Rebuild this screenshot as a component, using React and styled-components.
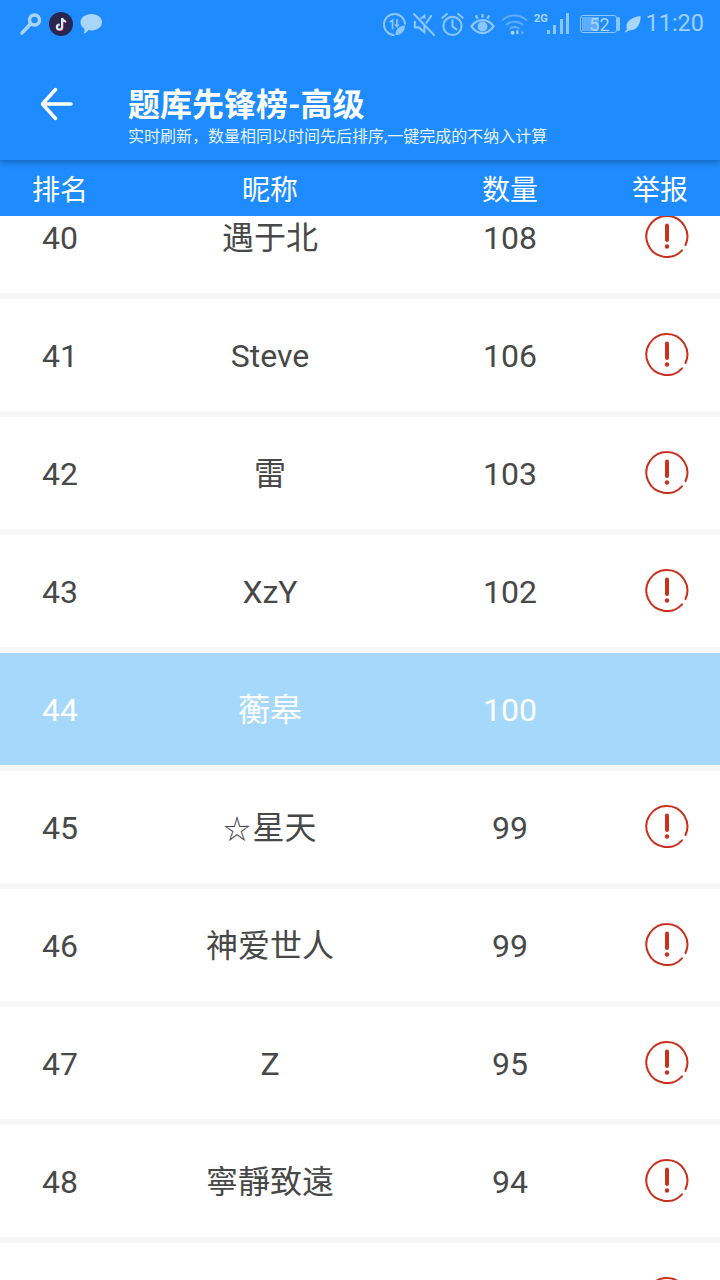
import React from 'react';
import styled, { createGlobalStyle } from 'styled-components';

const BLUE = '#1e8cff';
const FONT = `Roboto, 'Noto Sans CJK SC', sans-serif`;

const GlobalStyle = createGlobalStyle`
  html, body {
    margin: 0;
    padding: 0;
    background: #f7f7f7;
    font-family: ${FONT};
  }
`;

const Page = styled.div`
  width: 720px;
  height: 1280px;
  overflow: hidden;
  display: flex;
  flex-direction: column;
`;

const TopBar = styled.header`
  height: 160px;
  flex: none;
  background: ${BLUE};
  box-shadow: 0 2px 7px rgba(0, 0, 0, 0.32);
  position: relative;
  z-index: 2;
  display: flex;
  flex-direction: column;
`;

const StatusBar = styled.div`
  height: 48px;
  display: flex;
  align-items: center;
  justify-content: space-between;
  padding: 0 16px 0 19px;
`;

const StatusGroup = styled.div`
  display: flex;
  align-items: center;
  gap: ${(p) => p.$gap ?? 6}px;
  margin-left: ${(p) => p.$indent || 0}px;
`;

const Clock = styled.span`
  font-size: 23.5px;
  color: #9fd0ff;
  line-height: 1;
`;

const Battery = styled.div`
  width: 37px;
  height: 18px;
  border: 1px solid #8cc6ff;
  border-radius: 3px;
  box-sizing: border-box;
  padding: 1px;
  display: flex;
`;

const BatteryFill = styled.div`
  width: 52%;
  background: #5fadff;
`;

const BatteryLabel = styled.span`
  font-size: 18px;
  line-height: 16px;
  color: #a8d4ff;
  margin-left: -16px;
  width: 32px;
  text-align: center;
  flex: none;
`;

const NavRow = styled.div`
  flex: 1;
  display: flex;
  align-items: flex-start;
  padding: 34px 0 0 38px;
`;

const BackButton = styled.div`
  width: 90px;
  height: 44px;
  flex: none;
`;

const Titles = styled.div`
  display: flex;
  flex-direction: column;
`;

const Title = styled.h1`
  margin: 0;
  font-size: 32px;
  line-height: 46px;
  font-weight: 700;
  color: #fff;
  white-space: nowrap;
`;

const Subtitle = styled.p`
  margin: -1px 0 0;
  font-size: 16px;
  line-height: 20px;
  color: #e6f2ff;
  white-space: nowrap;
`;

const Columns = styled.div`
  display: grid;
  grid-template-columns: 120px 300px 180px 120px;
  align-items: center;
  justify-items: center;
`;

const TableHead = styled(Columns)`
  height: 56px;
  flex: none;
  background: ${BLUE};
  color: #fff;
  font-size: 28px;
  position: relative;
  z-index: 1;
`;

const ListViewport = styled.div`
  flex: 1;
  min-height: 0;
  overflow: hidden;
`;

// the list is scrolled, row 40 is cut off by the table head
const List = styled.div`
  margin-top: -35px;
  display: flex;
  flex-direction: column;
  gap: 6px;
`;

const Row = styled(Columns)`
  height: 112px;
  flex: none;
  background: ${(p) => (p.$mine ? '#a5d8fa' : '#fff')};
  color: ${(p) => (p.$mine ? '#fff' : '#484848')};
  font-size: 32px;
`;

const Cell = styled.span`
  white-space: nowrap;
`;

// digits and latin sit a little lower than the CJK glyphs in the reference
const RowCell = styled(Cell)`
  padding: ${(p) => (p.$cjk ? '0 0 4px' : '2px 0 0')};
`;

const Star = styled.span`
  font-size: 27px;
  margin-right: 2px;
`;

const ReportSlot = styled.div`
  width: 44px;
  height: 44px;
  margin-left: 14px;
  margin-top: -2px;
`;

const KeyIcon = () => (
  <svg width="24" height="24" viewBox="0 0 24 24" fill="none" stroke="#a9d6ff">
    <circle cx="15.5" cy="8" r="5" strokeWidth="3.4" />
    <path d="M11.5 12 L3 21" strokeWidth="3.4" strokeLinecap="round" />
  </svg>
);

const TikTokIcon = () => (
  <svg width="24" height="24" viewBox="0 0 24 24">
    <circle cx="12" cy="12" r="12" fill="#2b2551" />
    <path d="M13 6v9a2.6 2.6 0 1 1-2.6-2.6M13 6c.4 2 1.800 3.200 3.800 3.400" fill="none" stroke="#ff3b5c" strokeWidth="2" transform="translate(.6 .5)" />
    <path d="M13 6v9a2.6 2.6 0 1 1-2.600-2.600M13 6c.4 2 1.800 3.200 3.800 3.400" fill="none" stroke="#c8f3f7" strokeWidth="2" />
  </svg>
);

const ChatIcon = () => (
  <svg width="24" height="22" viewBox="0 0 24 22">
    <path d="M12.500 1C18.500 1 23 4.600 23 9.200s-4.500 8.200-10.500 8.200c-1 0-2-.1-2.900-.3C8.500 19 6 20.500 4.500 21c.8-1.300 1.200-3 1-5C3.300 14.500 1.500 12 1.500 9.200 1.500 4.600 6.500 1 12.500 1z" fill="#a9d6ff" />
  </svg>
);

const DataSaverIcon = () => (
  <svg width="23" height="23" viewBox="0 0 24 24" fill="none" stroke="#8cc6ff" strokeWidth="2">
    <path d="M12 23a11 11 0 1 1 11-11" />
    <path d="M7 9.500l3-2V17M14.500 6.500V14l-2-2M14.500 14l2-2" strokeWidth="1.800" />
    <path d="M23 13c0 6-4 10-10 10 0-6 4-10 10-10z" fill="#8cc6ff" stroke="none" />
  </svg>
);

const MuteIcon = () => (
  <svg width="23" height="23" viewBox="0 0 24 24" fill="none" stroke="#8cc6ff" strokeWidth="2.200">
    <path d="M3 8v7h4l6 5V12M13 6V3L9 6" />
    <path d="M2 1l21 22M20 3l-5 7" strokeLinecap="round" />
  </svg>
);

const AlarmIcon = () => (
  <svg width="23" height="25" viewBox="0 0 24 26" fill="none" stroke="#8cc6ff" strokeWidth="2.200">
    <circle cx="12" cy="14.500" r="9.500" />
    <path d="M12 8.500v6.500l4 3M1.500 6L6 2M22.500 6L18 2" strokeLinecap="round" />
  </svg>
);

const EyeIcon = () => (
  <svg width="25" height="23" viewBox="0 0 26 24" fill="none" stroke="#8cc6ff" strokeWidth="2.400">
    <path d="M1.500 14C4.500 9.500 8.500 7.500 13 7.500s8.500 2 11.500 6.500C21.500 18.500 17.500 21 13 21S4.500 18.500 1.500 14z" />
    <circle cx="13" cy="14" r="4" fill="#8cc6ff" />
    <path d="M13 1v4M6 2.500l2 3.500M20 2.500l-2 3.500" />
  </svg>
);

const WifiIcon = () => (
  <svg width="27" height="24" viewBox="0 0 28 24" fill="none" stroke="#5fadff" strokeWidth="2">
    <path d="M1 8.500C8.500 1.500 19.500 1.500 27 8.500M5 13c5.500-4.500 12.500-4.500 18 0M9 17c3-2.300 7-2.300 10 0" />
    <circle cx="12" cy="21" r="2" fill="#a9d6ff" stroke="none" />
    <path d="M17 18.500v4" stroke="#a9d6ff" />
    <path d="M21 18.500l3 2.500-3 2.500z" fill="#5fadff" stroke="none" />
  </svg>
);

const SignalIcon = () => (
  <svg width="36" height="28" viewBox="0 0 36 28" fill="#8cc6ff">
    <text x="0" y="12" fontSize="11" fontWeight="700" fontFamily="Roboto, sans-serif" fill="#a9d6ff">2G</text>
    <rect x="13" y="20" width="3" height="4" />
    <rect x="19" y="15" width="3" height="9" />
    <rect x="26" y="9" width="3" height="15" />
    <rect x="32" y="3" width="3" height="21" />
  </svg>
);

const BatteryTip = () => (
  <svg width="4" height="14" viewBox="0 0 4 14">
    <rect width="3" height="14" rx="1" fill="#8cc6ff" />
  </svg>
);

const LeafIcon = () => (
  <svg width="16" height="18" viewBox="0 0 16 18">
    <path d="M15.500 1C16 9 12 16 3.500 15.500L1 17.500l-1-1 2-2C-.5 7.500 6 2 15.500 1z" fill="#a9d6ff" />
  </svg>
);

const BackArrow = () => (
  <svg width="36" height="44" viewBox="0 0 36 44" fill="none" stroke="#fff" strokeWidth="3.500" strokeLinecap="round" strokeLinejoin="round">
    <path d="M4.500 22h28.500M17.500 7.500L4.500 22l13 14.500" />
  </svg>
);

const ReportIcon = () => (
  <svg width="44" height="44" viewBox="0 0 44 44" fill="none" stroke="#c9311f">
    <path d="M37 36.300A20.500 20.500 0 1 1 40.500 31" strokeWidth="2" strokeLinecap="round" />
    <path d="M22 11.500V26" strokeWidth="4" strokeLinecap="round" />
    <circle cx="22" cy="32.500" r="2.200" fill="#c9311f" stroke="none" />
  </svg>
);

const rows = [
  { rank: '40', name: '遇于北', cjk: true, count: 108 },
  { rank: '41', name: 'Steve', count: 106 },
  { rank: '42', name: '雷', cjk: true, count: 103 },
  { rank: '43', name: 'XzY', count: 102 },
  { rank: '44', name: '蘅皋', cjk: true, count: 100, mine: true },
  { rank: '45', star: true, name: '星天', cjk: true, count: 99 },
  { rank: '46', name: '神爱世人', cjk: true, count: 99 },
  { rank: '47', name: 'Z', count: 95 },
  { rank: '48', name: '寧靜致遠', cjk: true, count: 94 },
  // only the top of this row's icon is on screen
  { id: 'next' },
];

function App() {
  return (
    <>
      <GlobalStyle />
      <Page>
        <TopBar>
          <StatusBar>
            <StatusGroup>
              <KeyIcon />
              <TikTokIcon />
              <ChatIcon />
            </StatusGroup>
            <StatusGroup>
              <DataSaverIcon />
              <MuteIcon />
              <AlarmIcon />
              <EyeIcon />
              <WifiIcon />
              <SignalIcon />
              <StatusGroup $gap={4} $indent={4}>
                <StatusGroup $gap={0}>
                  <Battery>
                    <BatteryFill />
                    <BatteryLabel>52</BatteryLabel>
                  </Battery>
                  <BatteryTip />
                </StatusGroup>
                <LeafIcon />
                <Clock>11:20</Clock>
              </StatusGroup>
            </StatusGroup>
          </StatusBar>
          <NavRow>
            <BackButton>
              <BackArrow />
            </BackButton>
            <Titles>
              <Title>题库先锋榜-高级</Title>
              <Subtitle>实时刷新，数量相同以时间先后排序,一键完成的不纳入计算</Subtitle>
            </Titles>
          </NavRow>
        </TopBar>
        <TableHead>
          <Cell>排名</Cell>
          <Cell>昵称</Cell>
          <Cell>数量</Cell>
          <Cell>举报</Cell>
        </TableHead>
        <ListViewport>
          <List>
            {rows.map((r) => (
              <Row key={r.rank || r.id} $mine={r.mine}>
                <RowCell>{r.rank}</RowCell>
                <RowCell $cjk={r.cjk}>
                  {r.star && <Star>☆</Star>}
                  {r.name}
                </RowCell>
                <RowCell>{r.count}</RowCell>
                {!r.mine && (
                  <ReportSlot>
                    <ReportIcon />
                  </ReportSlot>
                )}
              </Row>
            ))}
          </List>
        </ListViewport>
      </Page>
    </>
  );
}

export default App;
